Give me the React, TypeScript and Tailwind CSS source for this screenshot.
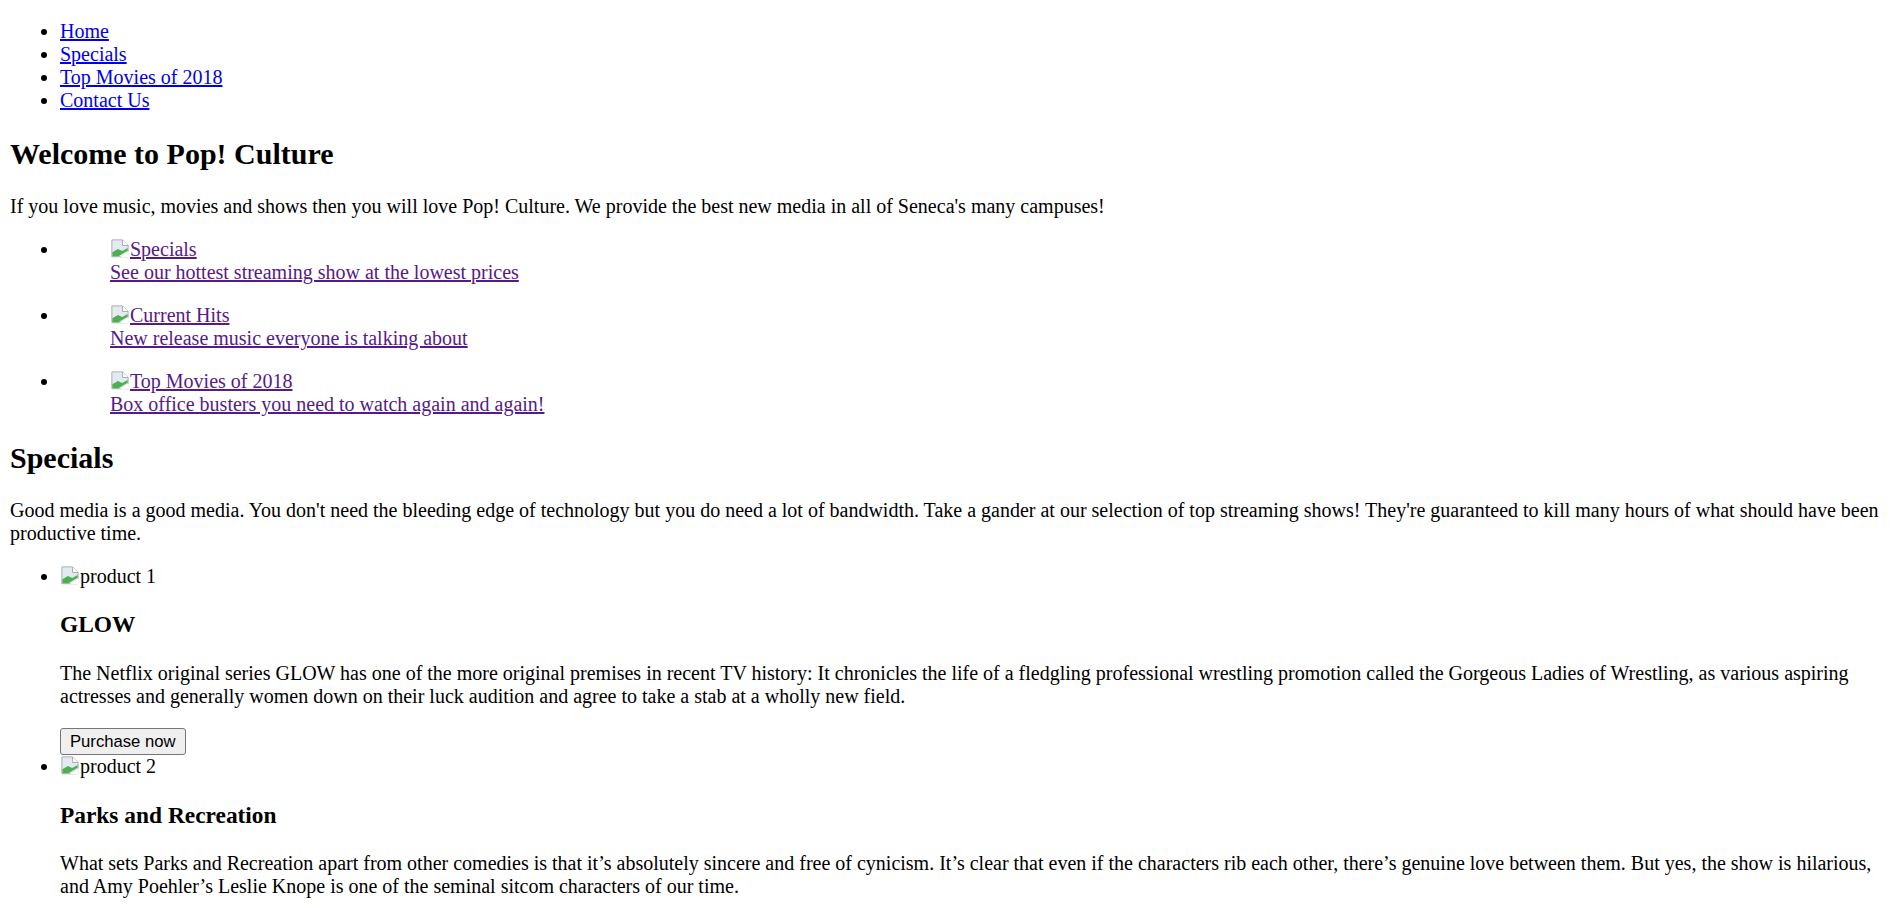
import React from 'react'

const navLinks = ['Home', 'Specials', 'Top Movies of 2018', 'Contact Us']

const featured = [
  { alt: 'Specials', caption: 'See our hottest streaming show at the lowest prices' },
  { alt: 'Current Hits', caption: 'New release music everyone is talking about' },
  { alt: 'Top Movies of 2018', caption: 'Box office busters you need to watch again and again!' },
]

const products = [
  {
    alt: 'product 1',
    title: 'GLOW',
    body: 'The Netflix original series GLOW has one of the more original premises in recent TV history: It chronicles the life of a fledgling professional wrestling promotion called the Gorgeous Ladies of Wrestling, as various aspiring actresses and generally women down on their luck audition and agree to take a stab at a wholly new field.',
  },
  {
    alt: 'product 2',
    title: 'Parks and Recreation',
    body: 'What sets Parks and Recreation apart from other comedies is that it’s absolutely sincere and free of cynicism. It’s clear that even if the characters rib each other, there’s genuine love between them. But yes, the show is hilarious, and Amy Poehler’s Leslie Knope is one of the seminal sitcom characters of our time.',
  },
]

// the little "broken image" glyph the browser shows with an alt text
const BrokenImage = ({ alt }: { alt: string }) => (
  <>
    <svg
      viewBox="0 0 16 16"
      width="20"
      height="20"
      className="inline-block align-[-2px]"
    >
      <path d="M1.5 1.5h8.5l4.5 4.5v9h-13z" fill="#e3eaf1" stroke="#a9b1b8" strokeWidth="0.8" />
      <path d="M10 1.5v4.5h4.5" fill="#ffffff" stroke="#a9b1b8" strokeWidth="0.8" />
      <path d="M1.9 14.6v-3.2l4.4-2.6 3.4 1.6 4.4-2.4v2.2l-7.4 4.4z" fill="#4caf50" />
      <path d="M8 15.2l7-4.6v4.6z" fill="#ffffff" />
    </svg>
    {alt}
  </>
)

export default function App() {
  return (
    <div className="bg-white px-[10px] font-['Liberation_Serif','Times_New_Roman',serif] text-[20px] leading-[normal] text-black">
      <ul className="my-[20px] list-disc pl-[50px]">
        {navLinks.map((l) => (
          <li key={l}>
            <a href="#" className="text-[#0000ee] underline">
              {l}
            </a>
          </li>
        ))}
      </ul>

      <h2 className="my-[24.5px] text-[30px] font-bold">Welcome to Pop! Culture</h2>
      <p className="my-[20px]">
        If you love music, movies and shows then you will love Pop! Culture. We provide the best
        new media in all of Seneca's many campuses!
      </p>

      <ul className="my-[20px] list-disc pl-[50px]">
        {featured.map((f) => (
          <li key={f.alt}>
            <figure className="mx-[50px] my-[20px]">
              <a href="#" className="text-[#551a8b] underline">
                <BrokenImage alt={f.alt} />
              </a>
              <figcaption>
                <a href="#" className="text-[#551a8b] underline">
                  {f.caption}
                </a>
              </figcaption>
            </figure>
          </li>
        ))}
      </ul>

      <h2 className="my-[24.5px] text-[30px] font-bold">Specials</h2>
      <p className="my-[20px]">
        Good media is a good media. You don't need the bleeding edge of technology but you do need
        a lot of bandwidth. Take a gander at our selection of top streaming shows! They're
        guaranteed to kill many hours of what should have been productive time.
      </p>

      <ul className="my-[20px] list-disc pl-[50px]">
        {products.map((p) => (
          <li key={p.alt}>
            <BrokenImage alt={p.alt} />
            <h3 className="my-[23.4px] text-[23.4px] font-bold">{p.title}</h3>
            <p className="my-[20px]">{p.body}</p>
            <button className="rounded-[3px] border border-[#767676] bg-[#efefef] px-[9px] py-[2.75px] align-middle font-['Liberation_Sans',Arial,sans-serif] text-[16.67px] leading-[normal] text-black">
              Purchase now
            </button>
          </li>
        ))}
      </ul>
    </div>
  )
}
